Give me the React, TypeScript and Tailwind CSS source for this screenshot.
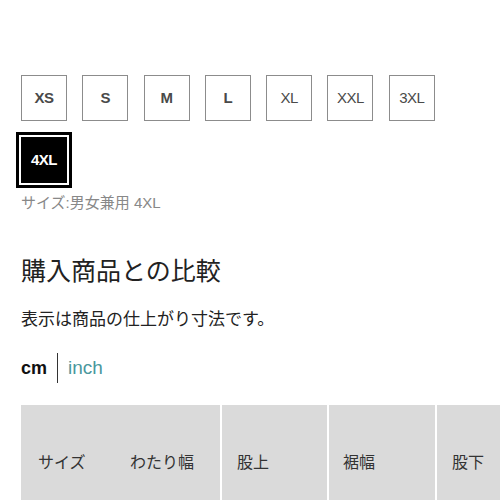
const sizes = ["XS", "S", "M", "L", "XL", "XXL", "3XL"]

const font = { fontFamily: '"Liberation Sans", Arial, "Noto Sans CJK JP", sans-serif' }

function SizeBox({ label, bold }: { label: string; bold: boolean }) {
  return (
    <button
      className={`flex h-[46px] w-[46px] items-center justify-center border-[1.5px] border-[#8c8c8c] bg-white text-[15px] tracking-[-0.5px] text-[#4a4a4a] ${
        bold ? "font-bold" : "font-normal"
      }`}
    >
      {label}
    </button>
  )
}

export default function App() {
  return (
    <div className="h-[500px] w-[500px] overflow-hidden bg-white pl-[21px] pt-[75px] text-[#222]" style={font}>
      <div className="flex w-[440px] flex-wrap gap-x-[15.3px] gap-y-[16px]">
        {sizes.map((s, i) => (
          <SizeBox key={s} label={s} bold={i < 4} />
        ))}
        <button className="flex h-[46px] w-[46px] items-center justify-center bg-black text-[15px] font-bold tracking-[-0.5px] text-white outline-3 outline-offset-2 outline-black">
          4XL
        </button>
      </div>

      <p className="mt-[9px] text-[15px] leading-[22px] text-[#888]">サイズ:男女兼用 4XL</p>

      <h2 className="mt-[39px] text-[25px] leading-[36px] text-[#222]">購入商品との比較</h2>

      <p className="mt-[18px] text-[17px] leading-[26px] text-[#222]">表示は商品の仕上がり寸法です。</p>

      <div className="mt-[20px] flex h-[30px] items-center">
        <span className="text-[18px] font-bold text-[#111]">cm</span>
        <span className="mx-[10px] h-[30px] w-px bg-[#333]" />
        <span className="text-[19px] text-[#4a979d]">inch</span>
      </div>

      <div className="mt-[22px] flex h-[116px] w-[560px] bg-[#dadada] text-[16px] text-[#333]">
        <div className="flex w-[92px] items-center pl-[17px]">サイズ</div>
        <div className="flex w-[107px] items-center pl-[17px]">わたり幅</div>
        <div className="w-[2px] bg-white" />
        <div className="flex w-[105px] items-center pl-[15px]">股上</div>
        <div className="w-[2px] bg-white" />
        <div className="flex w-[106px] items-center pl-[14px]">裾幅</div>
        <div className="w-[2px] bg-white" />
        <div className="flex w-[120px] items-center pl-[15px]">股下</div>
      </div>
    </div>
  )
}
